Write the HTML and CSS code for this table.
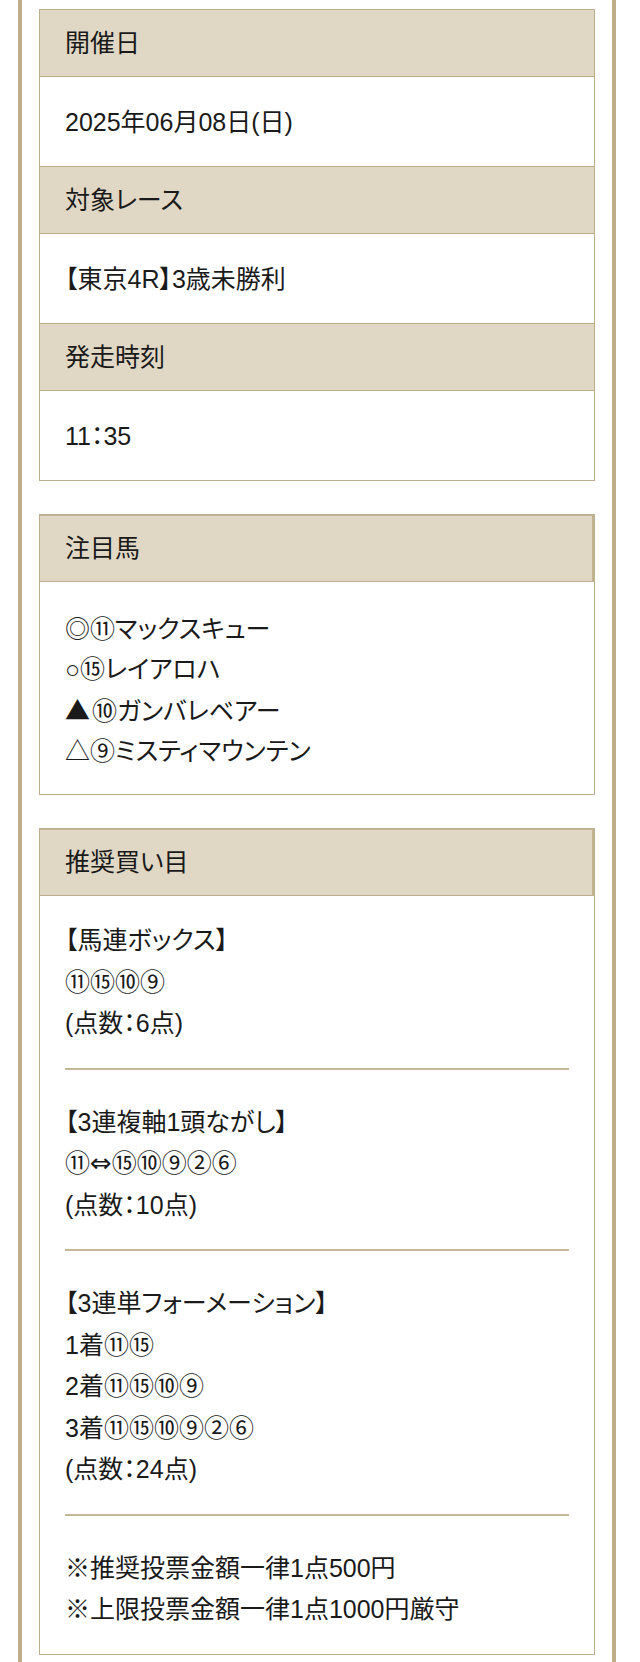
FILE: index.html
```html
<!DOCTYPE html>
<html lang="ja">
<head>
    <meta charset="UTF-8">
    <meta name="viewport" content="width=device-width, initial-scale=1.0">
    <title>本日の予想</title>
    <link rel="stylesheet" href="styles.css">
</head>
<body>
    <div class="page">
        <div class="info">
            <div class="info-head">開催日</div>
            <div class="info-body">2025年06月08日(日)</div>
            <div class="info-head">対象レース</div>
            <div class="info-body">【東京4R】3歳未勝利</div>
            <div class="info-head">発走時刻</div>
            <div class="info-body">11：35</div>
        </div>

        <div class="info">
            <div class="info-head strong">注目馬</div>
            <div class="info-body picks">
                <p>◎⑪マックスキュー</p>
                <p>○⑮レイアロハ</p>
                <p><span class="mark">▲</span>⑩ガンバレベアー</p>
                <p>△⑨ミスティマウンテン</p>
            </div>
        </div>

        <div class="info">
            <div class="info-head strong">推奨買い目</div>
            <div class="info-body bets">
                <div class="bet">
                    <p>【馬連ボックス】</p>
                    <p>⑪⑮⑩⑨</p>
                    <p>(点数：6点)</p>
                </div>
                <div class="bet">
                    <p>【3連複軸1頭ながし】</p>
                    <p>⑪<span class="arrow">⇔</span>⑮⑩⑨②⑥</p>
                    <p>(点数：10点)</p>
                </div>
                <div class="bet">
                    <p>【3連単フォーメーション】</p>
                    <p>1着⑪⑮</p>
                    <p>2着⑪⑮⑩⑨</p>
                    <p>3着⑪⑮⑩⑨②⑥</p>
                    <p>(点数：24点)</p>
                </div>
                <div class="bet">
                    <p>※推奨投票金額一律1点500円</p>
                    <p>※上限投票金額一律1点1000円厳守</p>
                </div>
            </div>
        </div>
    </div>
</body>
</html>
```

FILE: styles.css
```css
body{
    margin: 0;
    background-color: #fff;
    font-family: "Liberation Sans", "Noto Sans CJK JP", sans-serif;
    font-size: 25px;
    font-feature-settings: "palt";
    color: #1a1a1a;
}
p{
    margin: 0;
}
.page{
    margin: 0 24px 0 18px;
    min-height: 1662px;
    box-sizing: border-box;
    padding: 9px 17px 10px;
    border-left: 4px solid #bfae89;
    border-right: 4px solid #bfae89;
    display: flex;
    flex-direction: column;
    gap: 33px;
}
.info{
    border: 1px solid #bcae8e;
    background-color: #fff;
}
.info-head{
    background-color: #e0d8c5;
    line-height: 40px;
    padding: 13px 25px;
    border-bottom: 1px solid #bcae8e;
}
.info-head.strong{
    box-shadow: inset 0 1px 0 #c2b391, inset -2px 0 0 #c2b391;
}
.info-body{
    line-height: 40px;
    padding: 24.5px 25px;
    border-bottom: 1px solid #bcae8e;
}
.info-body:last-child{
    border-bottom: none;
}
.picks{
    padding: 27px 25px 23px;
}
.mark{
    font-family: "Noto Sans CJK JP", sans-serif;
    margin-right: 2px;
}
.arrow{
    font-family: "DejaVu Sans", sans-serif;
    font-size: 26px;
}
.bets{
    line-height: 41.5px;
    padding: 24px 25px 23px;
}
.bet{
    padding-bottom: 23px;
    margin-bottom: 32px;
    border-bottom: 2px solid #c6b896;
}
.bet:last-child{
    padding-bottom: 0;
    margin-bottom: 0;
    border-bottom: none;
}
```
